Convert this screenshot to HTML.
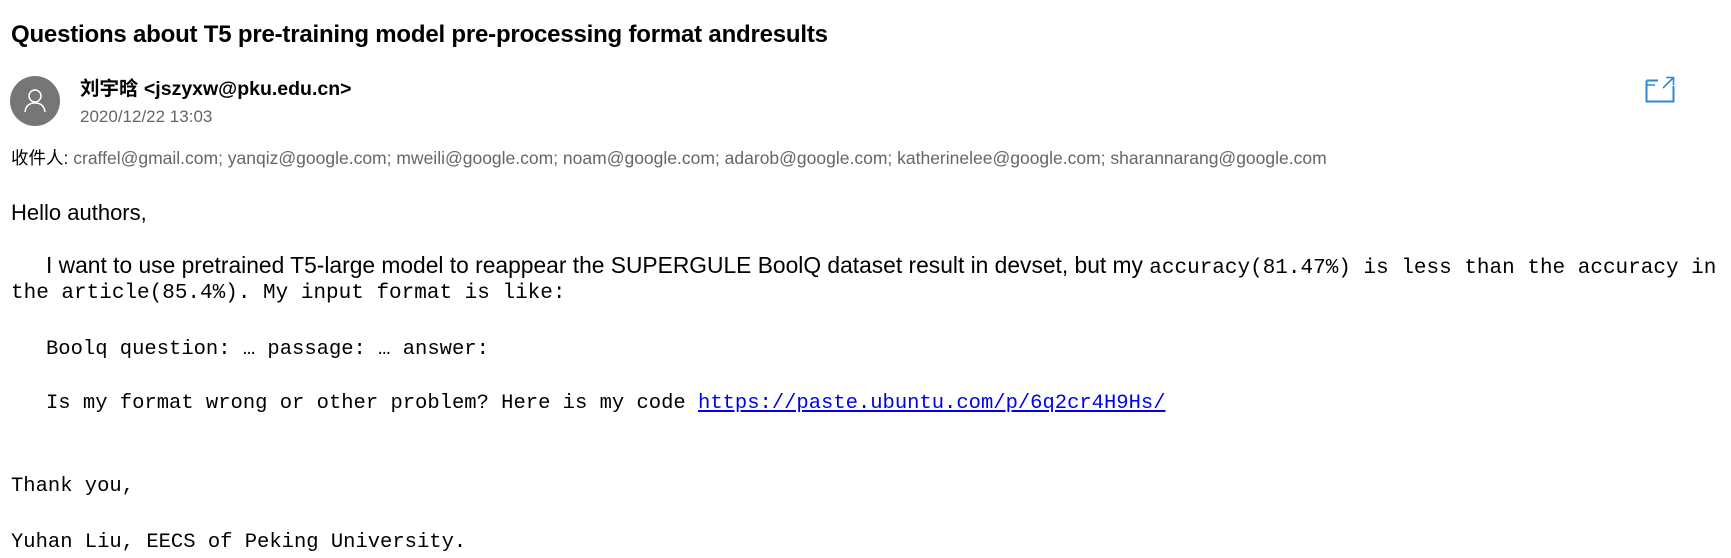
<!DOCTYPE html>
<html><head><meta charset="utf-8"><style>
body{margin:0;width:1731px;height:556px;background:#fff;position:relative;overflow:hidden;font-family:"Liberation Sans","Noto Sans CJK SC",sans-serif;color:#000}
.a{position:absolute;white-space:nowrap;line-height:30px}
.m{font-family:"Liberation Mono","Noto Sans CJK SC",monospace;font-size:20.5px}
a{color:#0000ee;text-decoration:underline}
</style></head><body>
<div class="a" style="left:11px;top:20px;font-size:24px;font-weight:bold;letter-spacing:-0.2px">Questions about T5 pre-training model pre-processing format andresults</div>
<div style="position:absolute;left:10px;top:76px;width:50px;height:50px;border-radius:50%;background:#767676">
<svg width="50" height="50" viewBox="0 0 50 50"><circle cx="25" cy="20" r="6" fill="none" stroke="#fff" stroke-width="1.5"/><path d="M15 36 Q16 27 25 27 Q34 27 35 36" fill="none" stroke="#fff" stroke-width="1.5"/></svg></div>
<div class="a" style="left:80px;top:74px;font-size:19.5px;font-weight:bold">刘宇晗 &lt;jszyxw@pku.edu.cn&gt;</div>
<div class="a" style="left:80px;top:102px;font-size:17px;color:#666">2020/12/22 13:03</div>
<svg style="position:absolute;left:1645px;top:76px" width="30" height="27" viewBox="0 0 30 27"><path d="M1.5 4.5H13M1.5 4.5V25.5H28.5V10" fill="none" stroke="#2b88d8" stroke-width="2"/><path d="M2 9H10M18 12L28 2M21 1.5H28.5V9" fill="none" stroke="#2b88d8" stroke-width="1.6"/></svg>
<div class="a" style="left:11px;top:143px;font-size:17.5px;color:#666"><span style="color:#000">收件人:</span> craffel@gmail.com; yanqiz@google.com; mweili@google.com; noam@google.com; adarob@google.com; katherinelee@google.com; sharannarang@google.com</div>
<div class="a" style="left:11px;top:198px;font-size:22px">Hello authors,</div>
<div class="a" style="left:46px;top:250px;font-size:22.8px">I want to use pretrained T5-large model to reappear the SUPERGULE BoolQ dataset result in devset, but my <span class="m" style="font-size:21px">accuracy(81.47%) is less than the accuracy in</span></div>
<div class="a m" style="left:11px;top:279px;font-size:21px">the article(85.4%). My input format is like:</div>
<div class="a m" style="left:46px;top:335px">Boolq question: … passage: … answer:</div>
<div class="a m" style="left:46px;top:389px">Is my format wrong or other problem? Here is my code <a>https://paste.ubuntu.com/p/6q2cr4H9Hs/</a></div>
<div class="a m" style="left:11px;top:472px">Thank you,</div>
<div class="a m" style="left:11px;top:528px">Yuhan Liu, EECS of Peking University.</div>
</body></html>
